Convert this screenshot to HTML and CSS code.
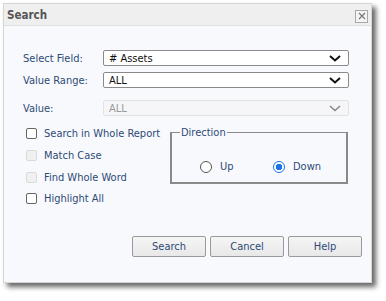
FILE: index.html
```html
<!DOCTYPE html>
<html lang="en">
<head>
  <meta charset="UTF-8">
  <title>Search</title>
  <link rel="stylesheet" href="styles.css">
</head>
<body>

<div class="dialog">
  <!-- Title bar -->
  <div class="title-bar">
    <span class="title">Search</span>
    <span class="close-btn">
      <svg width="8" height="8" viewBox="0 0 8 8"><path d="M1 1L7 7M7 1L1 7" stroke="#777" stroke-width="1.2"/></svg>
    </span>
  </div>

  <div class="dialog-body">
    <!-- Field rows -->
    <div class="fields">
      <label class="field-label">Select Field:</label>
      <div class="select">
        <span># Assets</span>
        <svg class="chevron" width="12" height="7" viewBox="0 0 12 7"><path d="M1 1L6 5.5L11 1" fill="none" stroke="#111" stroke-width="2"/></svg>
      </div>

      <label class="field-label">Value Range:</label>
      <div class="select">
        <span>ALL</span>
        <svg class="chevron" width="12" height="7" viewBox="0 0 12 7"><path d="M1 1L6 5.5L11 1" fill="none" stroke="#111" stroke-width="2"/></svg>
      </div>

      <label class="field-label value-label">Value:</label>
      <div class="select disabled value-select">
        <span>ALL</span>
        <svg class="chevron" width="12" height="7" viewBox="0 0 12 7"><path d="M1 1L6 5.5L11 1" fill="none" stroke="#888" stroke-width="1.6"/></svg>
      </div>
    </div>

    <!-- Options -->
    <div class="options">
      <div class="checks">
        <div class="check-row"><span class="checkbox"></span>Search in Whole Report</div>
        <div class="check-row"><span class="checkbox disabled"></span>Match Case</div>
        <div class="check-row"><span class="checkbox disabled"></span>Find Whole Word</div>
        <div class="check-row"><span class="checkbox"></span>Highlight All</div>
      </div>

      <fieldset class="direction">
        <legend>Direction</legend>
        <div class="radio-row">
          <span class="radio-item"><span class="radio"></span>Up</span>
          <span class="radio-item"><span class="radio checked"></span>Down</span>
        </div>
      </fieldset>
    </div>

    <!-- Buttons -->
    <div class="buttons">
      <button class="btn">Search</button>
      <button class="btn">Cancel</button>
      <button class="btn">Help</button>
    </div>
  </div>
</div>

</body>
</html>
```

FILE: styles.css
```css
/* Basic styles */
body {
  margin: 0;
  padding: 0;
  background: #fff;
  font-family: "DejaVu Sans", Tahoma, sans-serif;
  font-stretch: condensed;
  font-size: 11px;
  width: 386px;
  height: 301px;
  overflow: hidden;
}

/* Dialog window */
.dialog {
  margin: 3px 0 0 3px;
  width: 369px;
  height: 280px;
  background: #f8f9fd;
  border: 1px solid #d6d6d6;
  box-sizing: border-box;
  box-shadow: 4px 4px 5px rgba(0, 0, 0, 0.6);
  display: flex;
  flex-direction: column;
}

/* Title bar */
.title-bar {
  height: 21px;
  background: #efefef;
  border-bottom: 1px solid #e0e0e0;
  display: flex;
  align-items: center;
  justify-content: space-between;
  padding: 0 3px 0 3px;
}

.title {
  font-weight: bold;
  font-size: 11.5px;
  color: #555;
}

.close-btn {
  width: 11px;
  height: 11px;
  border: 1px solid #a8a8a8;
  background: #f4f4f4;
  display: flex;
  justify-content: center;
  align-items: center;
  margin-top: 3px;
}

.dialog-body {
  flex: 1;
  padding: 24px 9px 0 19px;
}

/* Field grid */
.fields {
  display: grid;
  grid-template-columns: 80px 246px;
  row-gap: 6px;
  align-items: center;
}

.field-label {
  color: #2d4a76;
}

.value-label {
  margin-top: 6px;
}

.select {
  height: 16px;
  box-sizing: border-box;
  border: 1px solid #8a8a8a;
  border-radius: 2px;
  background: #fff;
  color: #111;
  display: flex;
  align-items: center;
  justify-content: space-between;
  padding: 0 7px 0 5px;
}

.select.disabled {
  border-color: #e2e2e2;
  background: #f6f6f8;
  color: #999;
}

.value-select {
  margin-top: 6px;
}

/* Options row */
.options {
  display: flex;
  align-items: flex-start;
  margin-top: 7px;
}

.checks {
  width: 147px;
  box-sizing: border-box;
  padding-left: 3px;
}

.check-row {
  height: 21.7px;
  display: flex;
  align-items: center;
  color: #2d4a76;
}

.checkbox {
  width: 11px;
  height: 11px;
  box-sizing: border-box;
  border: 1px solid #666;
  border-radius: 2px;
  background: #fff;
  margin-right: 7px;
}

.checkbox.disabled {
  border-color: #dadada;
  background: #f0f0f0;
}

/* Direction group */
.direction {
  margin: 4px 0 0 0;
  padding: 0;
  width: 175px;
  height: 57px;
  box-sizing: border-box;
  border: 2px solid #8a8a8a;
  border-top-width: 1px;
}

.direction legend {
  color: #2d4a76;
  padding: 0 1px;
  margin-left: 8px;
  line-height: 11px;
}

.radio-row {
  display: flex;
  padding: 22px 0 0 28px;
}

.radio-item {
  display: flex;
  align-items: center;
  color: #2d4a76;
  width: 73px;
}

.radio {
  width: 12px;
  height: 12px;
  box-sizing: border-box;
  border: 1px solid #555;
  border-radius: 50%;
  background: #fff;
  margin-right: 8px;
}

.radio.checked {
  border: 1px solid #1a73e8;
  background: radial-gradient(circle, #1a73e8 0 3px, #fff 3.5px);
}

/* Buttons */
.buttons {
  display: flex;
  justify-content: flex-end;
  gap: 4px;
  margin-top: 26px;
}

.btn {
  width: 74px;
  height: 21px;
  font-family: inherit;
  font-stretch: condensed;
  font-size: 11px;
  color: #2d4a76;
  background: linear-gradient(#f5f5f5, #e8e8e8);
  border: 1px solid #9a9a9a;
  border-radius: 2px;
  padding: 0;
}
```
